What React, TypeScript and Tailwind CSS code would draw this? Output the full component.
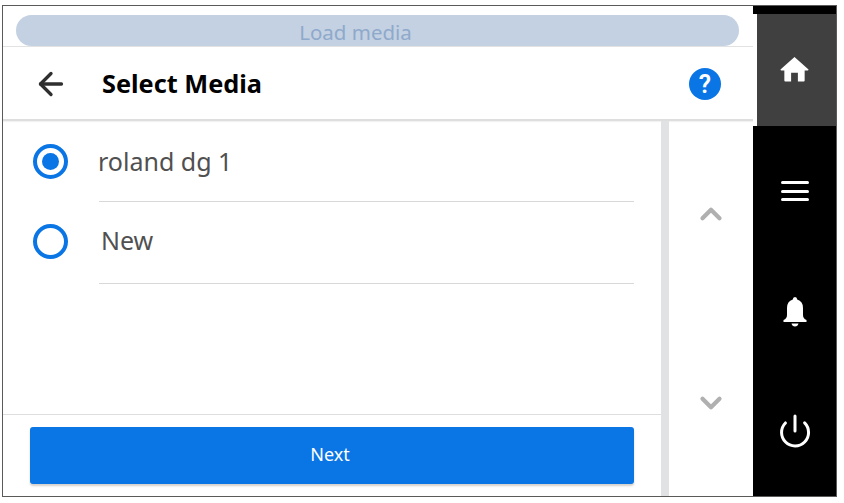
import { ArrowLeft, ChevronDown, ChevronUp, Power } from "lucide-react";

function HomeIcon() {
  return (
    <svg viewBox="0 0 30 26" className="w-[29px] h-[26px]" fill="#fff">
      <path d="M15 0.5 L29.5 13.5 Q29.5 14.5 28.5 14.5 L25.5 14.5 L25.5 25 Q25.5 26 24.5 26 L18.5 26 L18.5 17 L11.5 17 L11.5 26 L5.5 26 Q4.5 26 4.5 25 L4.5 14.5 L1.5 14.5 Q0.5 14.5 0.5 13.5 Z" />
    </svg>
  );
}

function BellIcon() {
  return (
    <svg viewBox="0 0 24 30" className="w-[24px] h-[30px]" fill="#fff">
      <path d="M12 0 Q14.2 0 14.2 2.6 Q20 4.4 20 11 L20 18 Q20 21.5 23.5 23 L23.5 25 L0.5 25 L0.5 23 Q4 21.5 4 18 L4 11 Q4 4.4 9.8 2.6 Q9.8 0 12 0 Z" />
      <path d="M8.5 26.5 L15.5 26.5 Q14.8 29.5 12 29.5 Q9.2 29.5 8.5 26.5 Z" />
    </svg>
  );
}

function HelpIcon() {
  return (
    <div className="w-8 h-8 rounded-full bg-[#0a75e5] flex items-center justify-center text-white text-[25px] font-semibold leading-none font-['Roboto',sans-serif]">
      ?
    </div>
  );
}

function Radio({ checked }: { checked?: boolean }) {
  return (
    <div className="w-[35px] h-[35px] rounded-full border-4 border-[#0a75e5] flex items-center justify-center shrink-0">
      {checked && <div className="w-[17px] h-[17px] rounded-full bg-[#0a75e5]" />}
    </div>
  );
}

export default function App() {
  return (
    <div className="w-[844px] h-[503px] bg-white pt-[5px] pl-[2px] font-['Noto_Sans',sans-serif]">
      <div className="w-[835px] h-[492px] border border-[#5a5a5a] flex overflow-hidden">
        {/* main */}
        <div className="w-[750px] flex flex-col">
          <div className="h-[41px] pt-[9px] pl-[13px] pr-[14px] border-b border-[#e2e2e2]">
            <div className="h-[31px] rounded-full bg-[#c3d1e2] flex items-center justify-center text-[20.5px] text-[#8fa9cb] leading-none pt-[3px] pr-[44px]">
              Load media
            </div>
          </div>
          <div className="h-[74px] border-b-2 border-[#dedede] flex items-center pl-[30px] pr-[32px] pt-[2px] shadow-[0_1px_1px_rgba(0,0,0,0.05)]">
            <ArrowLeft className="w-[36px] h-[36px] text-[#2f2f2f]" strokeWidth={2.2} />
            <div className="ml-[33px] text-[25.3px] font-bold text-black leading-none flex-1">Select Media</div>
            <HelpIcon />
          </div>
          <div className="flex-1 flex min-h-0">
            <div className="w-[658px] flex flex-col">
              <div className="flex-1 pt-[2px]">
                <div className="flex">
                  <div className="pl-[30px] pr-[31px] pt-[21px]">
                    <Radio checked />
                  </div>
                  <div className="flex-1 mr-[27px] h-[79px] border-b border-[#d8d8d8] flex items-center text-[25px] text-[#505050] leading-none pb-[1px]">
                    <span className="-ml-px">roland dg 1</span>
                  </div>
                </div>
                <div className="flex">
                  <div className="pl-[30px] pr-[31px] pt-[22px]">
                    <Radio />
                  </div>
                  <div className="flex-1 mr-[27px] h-[82px] border-b border-[#d8d8d8] flex items-center pl-[2px] text-[25px] text-[#505050] leading-none pb-[5px]">
                    New
                  </div>
                </div>
              </div>
              <div className="h-[82px] border-t border-[#dedede] pl-[27px] pr-[27px] pt-[12px]">
                <div className="h-[57px] rounded-[3px] bg-[#0a75e5] shadow-[0_2px_2px_rgba(90,70,50,0.25)] flex items-center justify-center text-white text-[18px] pr-[4px] pb-[2px]">
                  Next
                </div>
              </div>
            </div>
            <div className="w-2 bg-[#e0e2e4]" />
            <div className="flex-1 flex flex-col items-center text-[#b0b0b0]">
              <ChevronUp className="w-[34px] h-[34px] mt-[76px]" strokeWidth={3} />
              <ChevronDown className="w-[34px] h-[34px] mt-[155px]" strokeWidth={3} />
            </div>
          </div>
        </div>
        {/* sidebar */}
        <div className="flex-1 flex flex-col bg-black">
          <div className="h-[8px]" />
          <div className="h-[112px] flex bg-white pl-[4px]">
            <div className="flex-1 bg-[#404040] flex items-center justify-center pb-[2px] pr-[5px]">
              <HomeIcon />
            </div>
          </div>
          <div className="h-[121px] flex items-center justify-center pt-[9px]">
            <div className="flex flex-col gap-[5.5px] w-[28px]">
              <div className="h-[3px] rounded-full bg-white" />
              <div className="h-[3px] rounded-full bg-white" />
              <div className="h-[3px] rounded-full bg-white" />
            </div>
          </div>
          <div className="h-[120px] flex items-center justify-center pt-[10px]">
            <BellIcon />
          </div>
          <div className="flex-1 flex items-center justify-center pb-[1px]">
            <Power className="w-[36px] h-[36px] text-white" strokeWidth={2} />
          </div>
        </div>
      </div>
    </div>
  );
}
